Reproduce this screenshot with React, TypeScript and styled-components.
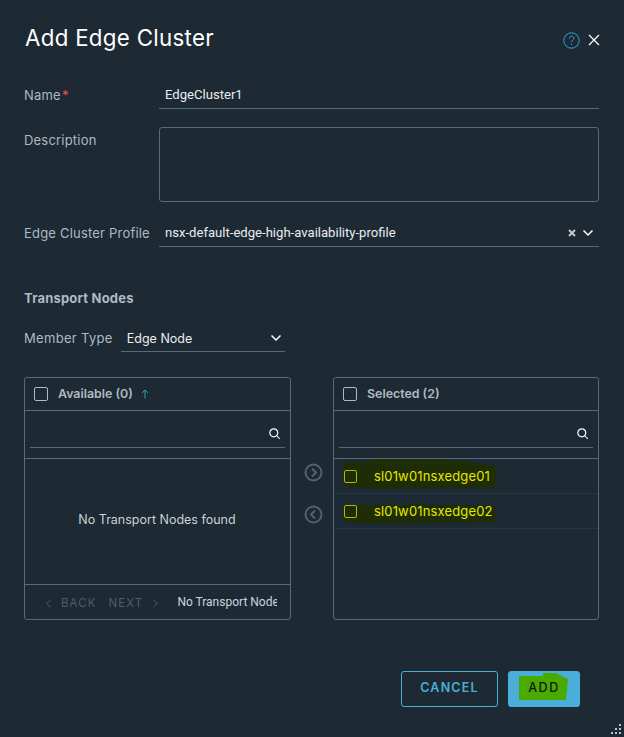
import React from 'react';
import styled, { createGlobalStyle } from 'styled-components';

const GlobalStyle = createGlobalStyle`
  html, body { margin: 0; padding: 0; background: #1d2933; }
  * { box-sizing: border-box; }
`;

const Modal = styled.div`
  position: relative;
  width: 624px;
  height: 737px;
  background: #1d2933;
  padding: 0 25px 0 24px;
  font-family: Inter, "Open Sans", sans-serif;
  color: #adbbc4;
  overflow: hidden;
`;

const Header = styled.header`
  display: flex;
  align-items: center;
  justify-content: space-between;
  height: 76px;
`;

const Title = styled.h1`
  margin: 0 0 2px 1px;
  font-size: 22.3px;
  font-weight: 400;
  color: #fff;
  letter-spacing: 0.3px;
`;

const HeaderIcons = styled.div`
  display: flex;
  align-items: center;
  gap: 8px;
  margin-top: 4px;
  margin-right: -1px;
`;

const FormRow = styled.div<{ $height: number }>`
  display: grid;
  grid-template-columns: 135px 1fr;
  height: ${(p) => p.$height}px;
`;

const Label = styled.label<{ $top?: number }>`
  font-size: 13px;
  line-height: 16px;
  padding-top: ${(p) => p.$top ?? 11}px;
  color: #adbbc4;
  white-space: nowrap;
  letter-spacing: 0.2px;
`;

const Required = styled.span`
  color: #f54f47;
  margin-left: 1px;
`;

const Underlined = styled.div`
  display: flex;
  align-items: center;
  justify-content: space-between;
  height: 33px;
  padding: 5px 6px 0;
  border-bottom: 1px solid #566b78;
  font-family: Roboto, "Liberation Sans", sans-serif;
  font-size: 13.1px;
  color: #eaedf0;
`;

const TextArea = styled.div`
  height: 75px;
  border: 1px solid #566b78;
  border-radius: 3px;
`;

const Controls = styled.div`
  display: flex;
  align-items: center;
  gap: 6px;
  margin-right: -1px;
`;

const SectionTitle = styled.h2`
  margin: 0;
  padding-top: 43px;
  font-size: 13px;
  line-height: 16px;
  font-weight: 700;
  letter-spacing: 0.2px;
  color: #adbbc4;
`;

const MemberRow = styled.div`
  display: flex;
  align-items: flex-end;
  gap: 8px;
  height: 46px;
`;

const MemberLabel = styled.span`
  font-size: 13px;
  line-height: 16px;
  padding-bottom: 6px;
  letter-spacing: 0.32px;
`;

const MemberSelect = styled.div`
  display: flex;
  align-items: center;
  justify-content: space-between;
  width: 164px;
  height: 27px;
  padding: 0 3px 0 6px;
  border-bottom: 1px solid #566b78;
  font-size: 12.5px;
  color: #eaedf0;
`;

const Lists = styled.div`
  display: grid;
  grid-template-columns: 267px 42px 266px;
  margin-top: 25px;
`;

const Panel = styled.section`
  display: flex;
  flex-direction: column;
  height: 243px;
  border: 1px solid #566b78;
  border-radius: 3px;
`;

const PanelHead = styled.div`
  display: flex;
  align-items: center;
  height: 33px;
  padding: 0 0 1px 9px;
  border-bottom: 1px solid #566b78;
  font-size: 12.4px;
  font-weight: 600;
  color: #adbbc4;
`;

const Check = styled.span<{ $yellow?: boolean }>`
  flex: none;
  display: block;
  width: ${(p) => (p.$yellow ? 13 : 14)}px;
  height: ${(p) => (p.$yellow ? 13 : 14)}px;
  border: ${(p) => (p.$yellow ? '1px solid #b4b800' : '1.5px solid #adbbc4')};
  border-radius: 2px;
`;

const HeadText = styled.span`
  margin-left: 10px;
`;

const SortArrow = styled.svg`
  margin-left: 8px;
`;

const SearchArea = styled.div`
  height: 48px;
  padding: 0 5px;
  border-bottom: 1px solid #566b78;
`;

const SearchField = styled.div`
  display: flex;
  align-items: center;
  justify-content: flex-end;
  height: 37px;
  padding: 8px 4px 0 0;
  border-bottom: 1px solid #566b78;
`;

const EmptyBody = styled.div`
  flex: 1;
  display: flex;
  align-items: center;
  justify-content: center;
  padding: 0 1px 4px 0;
  font-size: 12.5px;
  color: #c9d2d8;
`;

const PanelFooter = styled.div`
  display: flex;
  align-items: center;
  height: 35px;
  padding-left: 20px;
  border-top: 1px solid #566b78;
`;

const Pager = styled.span`
  display: flex;
  align-items: center;
  gap: 12px;
  font-size: 11.5px;
  letter-spacing: 1.1px;
  color: #4a5f6c;
  margin-top: 2px;
`;

const PagerItem = styled.span`
  display: flex;
  align-items: center;
  gap: 9px;
`;

const FooterNote = styled.span`
  width: 100px;
  margin-left: 18px;
  overflow: hidden;
  white-space: nowrap;
  font-family: Roboto, "Liberation Sans", sans-serif;
  font-size: 12px;
  color: #c9d6e0;
`;

const Movers = styled.div`
  display: flex;
  flex-direction: column;
  align-items: center;
  gap: 23px;
  padding-top: 86px;
  padding-left: 2px;
`;

const NodeRow = styled.div`
  position: relative;
  display: flex;
  align-items: center;
  height: 35px;
  padding-left: 10px;
  border-bottom: 1px solid #273641;
`;

const Scribble = styled.svg`
  position: absolute;
  left: 8px;
  top: 0;
`;

const NodeName = styled.span`
  position: relative;
  margin-left: 17px;
  font-size: 13px;
  letter-spacing: 0.15px;
  color: #e6e800;
`;

const NodeCheck = styled(Check)`
  position: relative;
`;

const Actions = styled.div`
  display: flex;
  justify-content: flex-end;
  gap: 10px;
  margin-top: 51px;
  margin-right: 19px;
`;

const Button = styled.button<{ $primary?: boolean }>`
  position: relative;
  height: 36px;
  width: ${(p) => (p.$primary ? 72 : 97)}px;
  border: 1px solid #49afd9;
  border-radius: 3px;
  background: ${(p) => (p.$primary ? '#49afd9' : 'transparent')};
  color: ${(p) => (p.$primary ? '#0e1a12' : '#49afd9')};
  font-family: inherit;
  font-size: 12.5px;
  font-weight: ${(p) => (p.$primary ? 500 : 600)};
  letter-spacing: ${(p) => (p.$primary ? 1.6 : 1.2)}px;
  padding: 0 0 3px;
`;

const ButtonMark = styled.svg`
  position: absolute;
  left: 10px;
  top: 1px;
`;

const ButtonText = styled.span`
  position: relative;
`;

const Grip = styled.svg`
  position: absolute;
  right: 1px;
  bottom: 1px;
`;

const Chevron = ({ size = 12 }: { size?: number }) => (
  <svg width={size} height={size} viewBox="0 0 12 12" fill="none" stroke="#fff" strokeWidth="1.5">
    <path d="M1.5 3.5 6 8l4.5-4.5" />
  </svg>
);

const SearchIcon = () => (
  <svg width="13" height="13" viewBox="0 0 13 13" fill="none" stroke="#fff" strokeWidth="1.2">
    <circle cx="5.8" cy="5.8" r="4" />
    <path d="m8.8 8.8 3 3" stroke="#d8e6ee" />
  </svg>
);

const MoveIcon = ({ back }: { back?: boolean }) => (
  <svg width="19" height="19" viewBox="0 0 19 19" fill="none" stroke="#4f626e" strokeWidth="2">
    <circle cx="9.5" cy="9.5" r="8" />
    <path d={back ? 'M11 5.5 7 9.5l4 4' : 'M8 5.5l4 4-4 4'} />
  </svg>
);

const App: React.FC = () => (
  <Modal>
    <GlobalStyle />
    <Header>
      <Title>Add Edge Cluster</Title>
      <HeaderIcons>
        <svg width="17" height="17" viewBox="0 0 17 17" fill="none" stroke="#2fa5de" strokeWidth="1">
          <circle cx="8.5" cy="8.5" r="7.7" />
          <path d="M6.2 6.6c0-1.5 1-2.4 2.4-2.4s2.3.9 2.3 2.1c0 1.800-2.300 1.800-2.300 3.900" />
          <path d="M8.6 11.700v1.300" />
        </svg>
        <svg width="12" height="12" viewBox="0 0 12 12" fill="none" stroke="#fff" strokeWidth="1.2">
          <path d="m1 1 10 10M11 1 1 11" />
        </svg>
      </HeaderIcons>
    </Header>

    <FormRow $height={51}>
      <Label>
        Name<Required>*</Required>
      </Label>
      <Underlined>EdgeCluster1</Underlined>
    </FormRow>
    <FormRow $height={87}>
      <Label $top={5}>Description</Label>
      <TextArea />
    </FormRow>
    <FormRow $height={33}>
      <Label>Edge Cluster Profile</Label>
      <Underlined>
        nsx-default-edge-high-availability-profile
        <Controls>
          <svg width="8" height="8" viewBox="0 0 8 8" fill="none" stroke="#c4c9cc" strokeWidth="2">
            <path d="m1 1 6 6M7 1 1 7" />
          </svg>
          <Chevron />
        </Controls>
      </Underlined>
    </FormRow>

    <SectionTitle>Transport Nodes</SectionTitle>
    <MemberRow>
      <MemberLabel>Member Type</MemberLabel>
      <MemberSelect>
        Edge Node
        <Chevron />
      </MemberSelect>
    </MemberRow>

    <Lists>
      <Panel>
        <PanelHead>
          <Check />
          <HeadText>Available (0)</HeadText>
          <SortArrow width="8" height="10" viewBox="0 0 8 10" fill="none" stroke="#2f9fb5" strokeWidth="1">
            <path d="M4 9.500V1M1 4l3-3 3 3" />
          </SortArrow>
        </PanelHead>
        <SearchArea>
          <SearchField>
            <SearchIcon />
          </SearchField>
        </SearchArea>
        <EmptyBody>No Transport Nodes found</EmptyBody>
        <PanelFooter>
          <Pager>
            <PagerItem>
              <svg width="7" height="9" viewBox="0 0 7 9" fill="none" stroke="#4a5f6c">
                <path d="M5.500 1 1.500 4.500l4 3.500" />
              </svg>
              BACK
            </PagerItem>
            <PagerItem>
              NEXT
              <svg width="7" height="9" viewBox="0 0 7 9" fill="none" stroke="#4a5f6c">
                <path d="m1.500 1 4 3.500-4 3.500" />
              </svg>
            </PagerItem>
          </Pager>
          <FooterNote>No Transport Nodes found</FooterNote>
        </PanelFooter>
      </Panel>

      <Movers>
        <MoveIcon />
        <MoveIcon back />
      </Movers>

      <Panel>
        <PanelHead>
          <Check />
          <HeadText>Selected (2)</HeadText>
        </PanelHead>
        <SearchArea>
          <SearchField>
            <SearchIcon />
          </SearchField>
        </SearchArea>
        <NodeRow>
          <Scribble width="156" height="34" viewBox="0 0 156 34">
            <path d="M1 4 30 2 32 0H98L120 2 L154 7 L155 28 L100 29 L40 30 L5 28 L1 24Z" fill="#1e2d05" />
          </Scribble>
          <NodeCheck $yellow />
          <NodeName>sl01w01nsxedge01</NodeName>
        </NodeRow>
        <NodeRow>
          <Scribble width="156" height="34" viewBox="0 0 156 34">
            <path d="M1 11 90 11 L153 12 L153 28 L60 29 L10 29 L1 26Z" fill="#1e2d05" />
          </Scribble>
          <NodeCheck $yellow />
          <NodeName>sl01w01nsxedge02</NodeName>
        </NodeRow>
      </Panel>
    </Lists>

    <Actions>
      <Button>CANCEL</Button>
      <Button $primary>
        <ButtonMark width="50" height="30" viewBox="0 0 50 30">
          <path d="M0 3H24V0H37L49 6L47 27H0Z" fill="#4aaa00" />
        </ButtonMark>
        <ButtonText>ADD</ButtonText>
      </Button>
    </Actions>

    <Grip width="13" height="13" viewBox="0 0 13 13" fill="#b9c2c8">
      <rect x="9" y="1" width="2" height="2" />
      <rect x="5" y="5" width="2" height="2" />
      <rect x="9" y="5" width="2" height="2" />
      <rect x="1" y="9" width="2" height="2" />
      <rect x="5" y="9" width="2" height="2" />
      <rect x="9" y="9" width="2" height="2" />
    </Grip>
  </Modal>
);

export default App;
